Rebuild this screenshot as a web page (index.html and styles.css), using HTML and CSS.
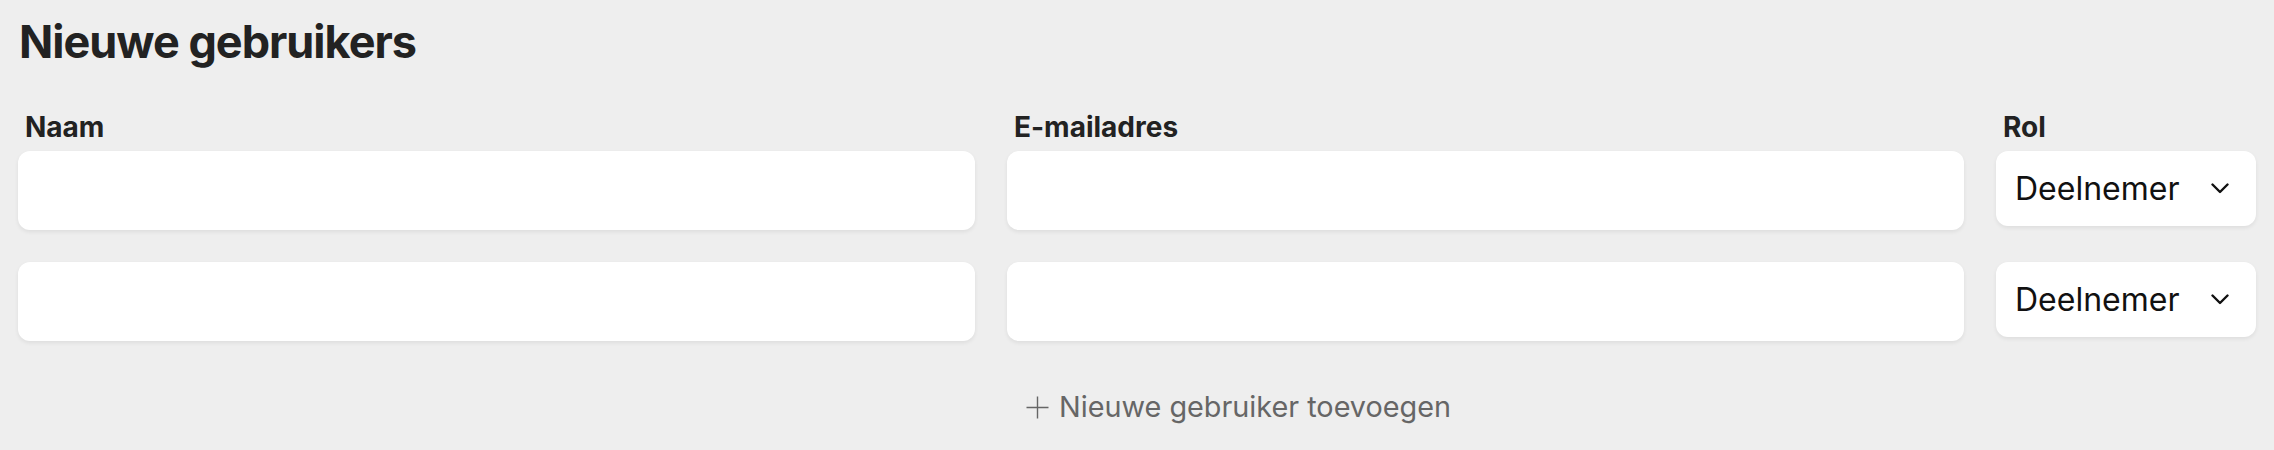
FILE: index.html
```html
<!DOCTYPE html>
<html lang="nl">
<head>
<meta charset="utf-8">
<title>Nieuwe gebruikers</title>
<link rel="stylesheet" href="styles.css">
</head>
<body>
<main class="page">
  <h1 class="title">Nieuwe gebruikers</h1>
  <div class="labels">
    <span class="label">Naam</span>
    <span class="label">E-mailadres</span>
    <span class="label">Rol</span>
  </div>
  <div class="rows">
    <div class="row">
      <div class="field"></div>
      <div class="field"></div>
      <div class="select"><span>Deelnemer</span>
        <svg class="chev" width="18" height="11" viewBox="0 0 18 11"><polyline points="1.5,1.5 9,9 16.5,1.5" fill="none" stroke="#111" stroke-width="2.4" stroke-linecap="round" stroke-linejoin="round"/></svg>
      </div>
    </div>
    <div class="row">
      <div class="field"></div>
      <div class="field"></div>
      <div class="select"><span>Deelnemer</span>
        <svg class="chev" width="18" height="11" viewBox="0 0 18 11"><polyline points="1.5,1.5 9,9 16.5,1.5" fill="none" stroke="#111" stroke-width="2.4" stroke-linecap="round" stroke-linejoin="round"/></svg>
      </div>
    </div>
  </div>
  <div class="add-row">
    <button class="add" type="button">
      <svg width="23" height="23" viewBox="0 0 23 23"><path d="M11.5 0.5v22M0.5 11.5h22" stroke="#666" stroke-width="1.4" fill="none"/></svg>
      <span>Nieuwe gebruiker toevoegen</span>
    </button>
  </div>
</main>
</body>
</html>
```
FILE: styles.css
```css
* { box-sizing: border-box; }
html, body { margin: 0; padding: 0; }
body {
  background: #eeeeee;
  font-family: Inter, "Noto Sans", sans-serif;
  color: #222;
}
.page {
  padding: 14px 18px 0 18px;
}
.title {
  margin: 0;
  font-size: 45px;
  line-height: 56px;
  font-weight: 700;
  letter-spacing: -1px;
  color: #222;
  padding-left: 1px;
}
.labels,
.row {
  display: grid;
  grid-template-columns: 1fr 1fr 260px;
  column-gap: 32px;
}
.labels {
  margin-top: 40px;
  margin-bottom: 7px;
}
.label {
  font-size: 28px;
  line-height: 34px;
  font-weight: 700;
  padding-left: 7px;
  color: #222;
}
.rows {
  display: flex;
  flex-direction: column;
  gap: 32px;
}
.row { align-items: start; }
.field {
  height: 79px;
  background: #fff;
  border-radius: 12px;
  box-shadow: 0 2px 4px rgba(0,0,0,0.07);
}
.select {
  height: 75px;
  background: #fff;
  border-radius: 12px;
  box-shadow: 0 2px 4px rgba(0,0,0,0.07);
  display: flex;
  align-items: center;
  justify-content: space-between;
  padding: 0 27px 0 19px;
  font-size: 32px;
  color: #111;
}
.chev { display: block; }
.add-row {
  margin-top: 49px;
  padding-left: 1008px;
}
.add {
  display: flex;
  align-items: center;
  gap: 10px;
  background: none;
  border: 0;
  padding: 0;
  font-family: inherit;
  font-size: 28.8px;
  line-height: 34px;
  color: #666;
  cursor: pointer;
}
.add svg { display: block; }
```
